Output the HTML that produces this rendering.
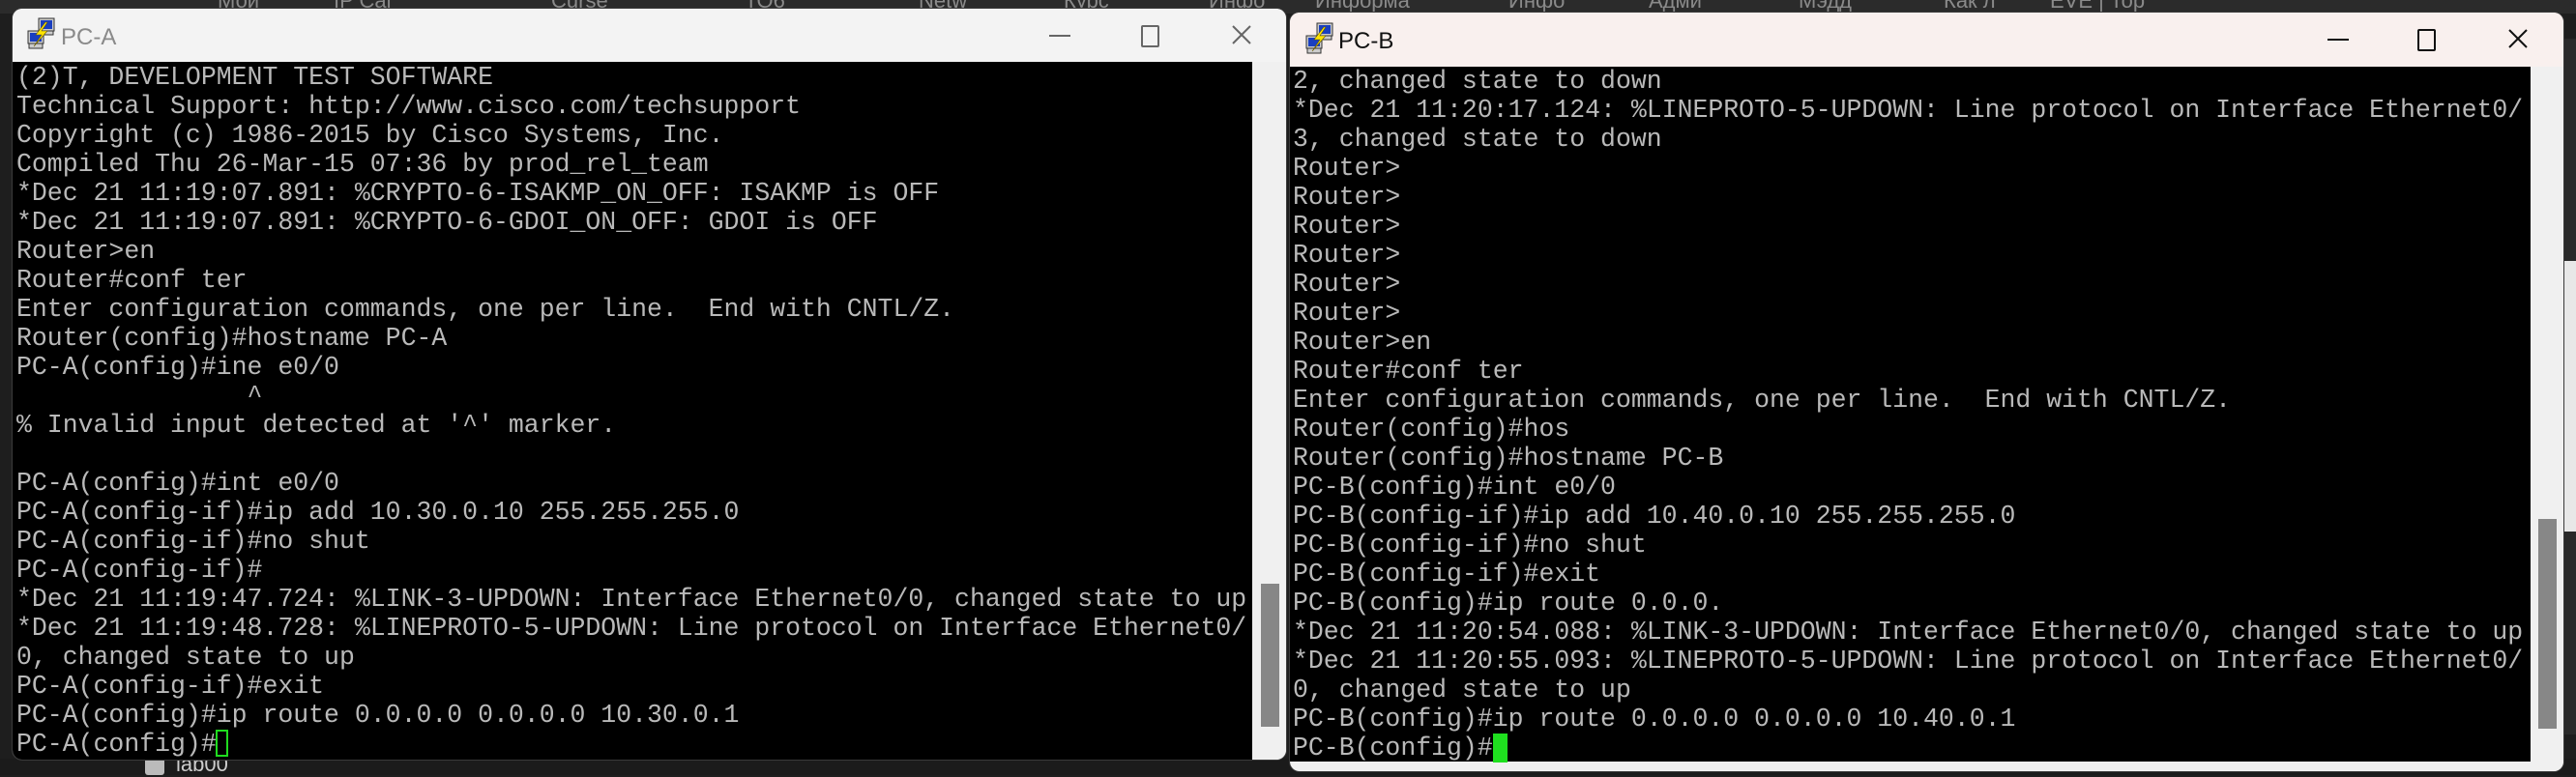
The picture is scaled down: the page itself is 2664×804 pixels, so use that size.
<!DOCTYPE html>
<html><head><meta charset="utf-8"><style>
html,body{margin:0;padding:0}
body{width:2664px;height:802px;background:#1e1e1e;position:relative;overflow:hidden;font-family:"Liberation Sans",sans-serif}
.abs{position:absolute}
.win{position:absolute;border-radius:10px;overflow:hidden;box-shadow:0 0 0 1px #3a3a3a}
.tb{position:absolute;left:0;right:0;top:0}
.term{position:absolute;background:#000}
.txt{position:absolute;font-family:"Liberation Mono",monospace;font-size:26.5px;line-height:30px;white-space:pre;color:#b9b9b9;margin:0}
.sb{position:absolute;background:#f0f0f0}
.th{position:absolute;background:#878787}
.title{position:absolute;font-size:24px}
.btn{position:absolute}
.tab{position:absolute;top:-12px;color:#8a8a8a;font-size:22px}
</style></head><body>
<!-- background browser tabs -->
<div class="abs" style="left:0;top:0;width:2664px;height:14px;background:#2b2b2b"></div>
<div class="tab" style="left:225px">Мои</div>
<div class="tab" style="left:345px">IP Cal</div>
<div class="tab" style="left:570px">Curse</div>
<div class="tab" style="left:770px">ТО6</div>
<div class="tab" style="left:950px">Netw</div>
<div class="tab" style="left:1100px">Курс</div>
<div class="tab" style="left:1250px">Инфо</div>
<div class="tab" style="left:1360px">Информа</div>
<div class="tab" style="left:1560px">Инфо</div>
<div class="tab" style="left:1705px">Адми</div>
<div class="tab" style="left:1860px">Мэдд</div>
<div class="tab" style="left:2010px">Как л</div>
<div class="tab" style="left:2120px">EVE | Тор</div>
<div class="abs" style="left:0;top:785px;width:2664px;height:17px;background:#1b1b1b"></div>
<div class="abs" style="left:150px;top:784px;width:20px;height:18px;background:#bbb;border-radius:3px"></div>
<div class="abs" style="left:182px;top:778px;color:#ccc;font-size:22px">lab00</div>
<div class="abs" style="left:2651px;top:40px;width:13px;height:720px;background:#2a2a2a"></div>
<div class="abs" style="left:2651px;top:270px;width:13px;height:280px;background:#e8e8e8"></div>

<!-- Window A -->
<div class="win" style="left:13px;top:9px;width:1317px;height:777px;background:#f3f3f3">
  <div class="tb" style="height:55px;background:#f3f3f3"></div>
  <svg class="abs" style="left:14px;top:9px" width="32" height="34" viewBox="0 0 32 34">
    <rect x="13" y="1" width="16" height="13" fill="#ccc" stroke="#333"/><rect x="15" y="3" width="12" height="9" fill="#1a3fc0"/>
    <rect x="14" y="14" width="14" height="4" fill="#ccc" stroke="#333"/>
    <rect x="2" y="14" width="16" height="13" fill="#ccc" stroke="#333"/><rect x="4" y="16" width="12" height="9" fill="#1a3fc0"/>
    <rect x="3" y="27" width="14" height="5" fill="#ccc" stroke="#333"/>
    <path d="M20 5 L10 18 L16 18 L8 30 L22 14 L16 14 L22 5Z" fill="#ffe500" stroke="#6a5a00" stroke-width=".6"/>
  </svg>
  <div class="title" style="left:50px;top:16px;color:#8a8a8a">PC-A</div>
  <div class="btn" style="left:1072px;top:27px;width:22px;height:2px;background:#666"></div>
  <div class="btn" style="left:1167px;top:17px;width:15px;height:19px;border:2px solid #666;border-radius:2px"></div>
  <svg class="btn" style="left:1260px;top:16px" width="22" height="22"><path d="M2 2L20 20M20 2L2 20" stroke="#666" stroke-width="2"/></svg>
  <div class="term" style="left:0;top:55px;width:1282px;height:722px"></div>
  <div class="sb" style="left:1282px;top:55px;width:35px;height:722px"></div>
  <div class="th" style="left:1291px;top:595px;width:19px;height:148px"></div>
<pre class="txt" style="left:4px;top:56px">(2)T, DEVELOPMENT TEST SOFTWARE
Technical Support: http://www.cisco.com/techsupport
Copyright (c) 1986-2015 by Cisco Systems, Inc.
Compiled Thu 26-Mar-15 07:36 by prod_rel_team
*Dec 21 11:19:07.891: %CRYPTO-6-ISAKMP_ON_OFF: ISAKMP is OFF
*Dec 21 11:19:07.891: %CRYPTO-6-GDOI_ON_OFF: GDOI is OFF
Router>en
Router#conf ter
Enter configuration commands, one per line.  End with CNTL/Z.
Router(config)#hostname PC-A
PC-A(config)#ine e0/0
               ^
% Invalid input detected at '^' marker.

PC-A(config)#int e0/0
PC-A(config-if)#ip add 10.30.0.10 255.255.255.0
PC-A(config-if)#no shut
PC-A(config-if)#
*Dec 21 11:19:47.724: %LINK-3-UPDOWN: Interface Ethernet0/0, changed state to up
*Dec 21 11:19:48.728: %LINEPROTO-5-UPDOWN: Line protocol on Interface Ethernet0/
0, changed state to up
PC-A(config-if)#exit
PC-A(config)#ip route 0.0.0.0 0.0.0.0 10.30.0.1
PC-A(config)#</pre>
  <div class="abs" style="left:210px;top:746px;width:13px;height:28px;border:2px solid #1fdc1f;box-sizing:border-box"></div>
</div>

<!-- Window B -->
<div class="win" style="left:1334px;top:13px;width:1317px;height:785px;background:#f0f0f0">
  <div class="tb" style="height:56px;background:#f9f0ee"></div>
  <svg class="abs" style="left:15px;top:10px" width="32" height="34" viewBox="0 0 32 34">
    <rect x="13" y="1" width="16" height="13" fill="#ccc" stroke="#333"/><rect x="15" y="3" width="12" height="9" fill="#1a3fc0"/>
    <rect x="14" y="14" width="14" height="4" fill="#ccc" stroke="#333"/>
    <rect x="2" y="14" width="16" height="13" fill="#ccc" stroke="#333"/><rect x="4" y="16" width="12" height="9" fill="#1a3fc0"/>
    <rect x="3" y="27" width="14" height="5" fill="#ccc" stroke="#333"/>
    <path d="M20 5 L10 18 L16 18 L8 30 L22 14 L16 14 L22 5Z" fill="#ffe500" stroke="#6a5a00" stroke-width=".6"/>
  </svg>
  <div class="title" style="left:50px;top:16px;color:#111">PC-B</div>
  <div class="btn" style="left:1073px;top:27px;width:22px;height:2px;background:#111"></div>
  <div class="btn" style="left:1166px;top:17px;width:15px;height:19px;border:2px solid #111;border-radius:2px"></div>
  <svg class="btn" style="left:1259px;top:16px" width="22" height="22"><path d="M2 2L20 20M20 2L2 20" stroke="#111" stroke-width="2"/></svg>
  <div class="term" style="left:0;top:56px;width:1283px;height:719px"></div>
  <div class="sb" style="left:1283px;top:56px;width:34px;height:729px"></div>
  <div class="th" style="left:1291px;top:524px;width:19px;height:217px"></div>
<pre class="txt" style="left:3px;top:56px">2, changed state to down
*Dec 21 11:20:17.124: %LINEPROTO-5-UPDOWN: Line protocol on Interface Ethernet0/
3, changed state to down
Router>
Router>
Router>
Router>
Router>
Router>
Router>en
Router#conf ter
Enter configuration commands, one per line.  End with CNTL/Z.
Router(config)#hos
Router(config)#hostname PC-B
PC-B(config)#int e0/0
PC-B(config-if)#ip add 10.40.0.10 255.255.255.0
PC-B(config-if)#no shut
PC-B(config-if)#exit
PC-B(config)#ip route 0.0.0.
*Dec 21 11:20:54.088: %LINK-3-UPDOWN: Interface Ethernet0/0, changed state to up
*Dec 21 11:20:55.093: %LINEPROTO-5-UPDOWN: Line protocol on Interface Ethernet0/
0, changed state to up
PC-B(config)#ip route 0.0.0.0 0.0.0.0 10.40.0.1
PC-B(config)#</pre>
  <div class="abs" style="left:210px;top:746px;width:15px;height:30px;background:#1fe01f"></div>
</div>
</body></html>
